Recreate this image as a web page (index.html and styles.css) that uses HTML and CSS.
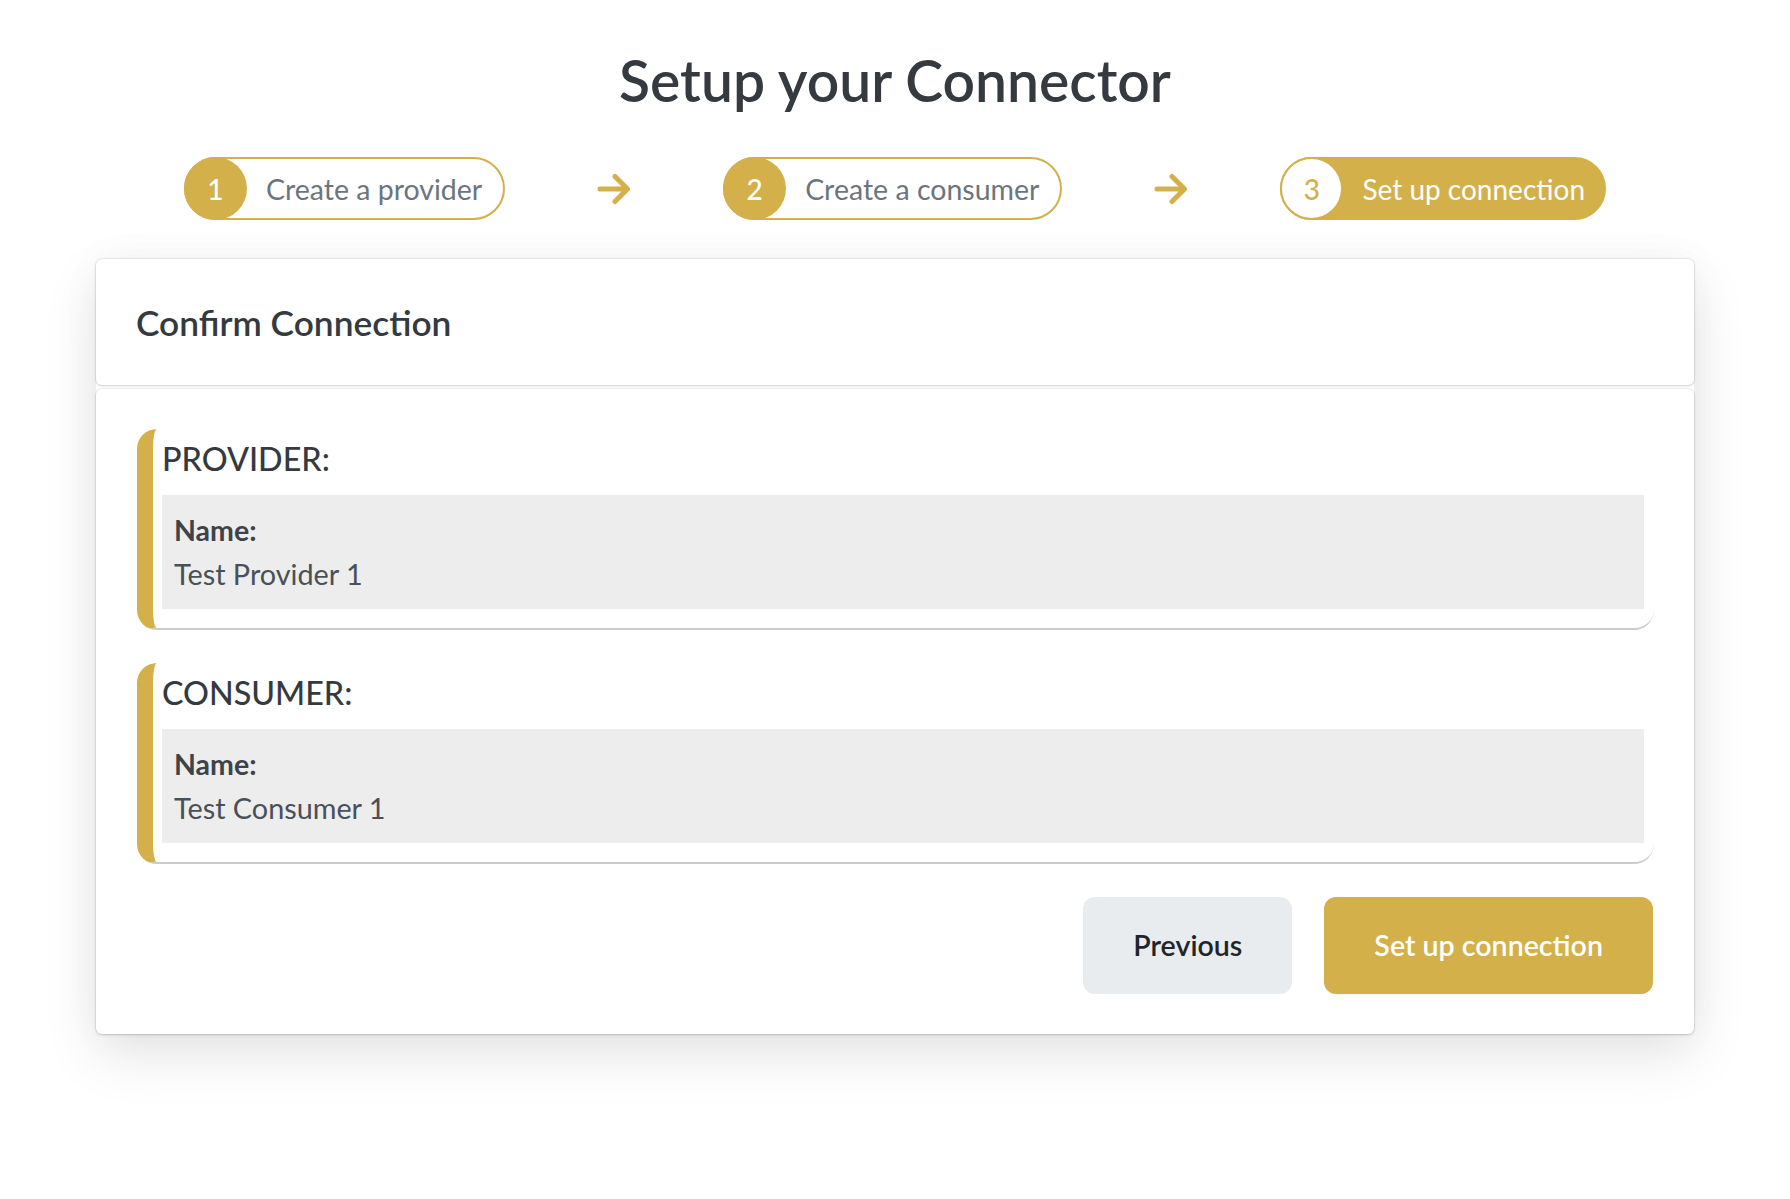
FILE: index.html
```html
<!DOCTYPE html>
<html lang="en">
<head>
<meta charset="utf-8">
<title>Setup your Connector</title>
<link rel="stylesheet" href="styles.css">
</head>
<body>
<main class="page">
  <h1 class="title">Setup your Connector</h1>
  <nav class="steps">
    <div class="pill">
      <span class="num">1</span>
      <span class="label">Create a provider</span>
    </div>
    <svg class="arrow" viewBox="0 0 34 32" width="34" height="32" aria-hidden="true">
      <path d="M3 16 H30 M18 3.5 L30.5 16 L18 28.5" fill="none" stroke="#d3b04a" stroke-width="5" stroke-linecap="round" stroke-linejoin="round"/>
    </svg>
    <div class="pill">
      <span class="num">2</span>
      <span class="label">Create a consumer</span>
    </div>
    <svg class="arrow" viewBox="0 0 34 32" width="34" height="32" aria-hidden="true">
      <path d="M3 16 H30 M18 3.5 L30.5 16 L18 28.5" fill="none" stroke="#d3b04a" stroke-width="5" stroke-linecap="round" stroke-linejoin="round"/>
    </svg>
    <div class="pill active">
      <span class="num">3</span>
      <span class="label">Set up connection</span>
    </div>
  </nav>

  <section class="card-wrap">
    <header class="card card-header">
      <h2 class="card-title">Confirm Connection</h2>
    </header>
    <div class="card card-body">
      <div class="entity">
        <h3 class="entity-title">PROVIDER:</h3>
        <div class="entity-box">
          <div class="field-label">Name:</div>
          <div class="field-value">Test Provider 1</div>
        </div>
      </div>
      <div class="entity">
        <h3 class="entity-title">CONSUMER:</h3>
        <div class="entity-box">
          <div class="field-label">Name:</div>
          <div class="field-value">Test Consumer 1</div>
        </div>
      </div>
      <div class="actions">
        <button class="btn btn-light" type="button">Previous</button>
        <button class="btn btn-gold" type="button">Set up connection</button>
      </div>
    </div>
  </section>
</main>
</body>
</html>
```

FILE: styles.css
```css
* { box-sizing: border-box; }

html, body {
  margin: 0;
  padding: 0;
  background: #ffffff;
}

body {
  font-family: "Lato", "Noto Sans", "Liberation Sans", sans-serif;
  color: #343a40;
}

.page {
  display: flex;
  flex-direction: column;
  align-items: center;
  min-height: 1199px;
  padding-top: 46px;
  padding-bottom: 120px;
}

.title {
  margin: 0;
  font-size: 57px;
  line-height: 1.2;
  font-weight: 600;
  color: #343a40;
}

.steps {
  display: flex;
  align-items: center;
  justify-content: center;
  gap: 92px;
  margin-top: 43px;
}

.arrow {
  display: block;
  flex: none;
}

.pill {
  display: flex;
  align-items: center;
  height: 63px;
  border: 2px solid #d3b04a;
  border-radius: 32px;
  background: #ffffff;
  padding-right: 21px;
}

.pill .num {
  flex: none;
  width: 63px;
  height: 63px;
  margin: -2px 0 -2px -2px;
  border-radius: 50%;
  background: #d3b04a;
  color: #ffffff;
  display: flex;
  align-items: center;
  justify-content: center;
  font-size: 28px;
  font-weight: 500;
}

.pill .label {
  margin-left: 19px;
  font-size: 28.5px;
  color: #6c757d;
  white-space: nowrap;
}

.pill.active {
  background: #d3b04a;
  padding-right: 19px;
}

.pill.active .num {
  background: #ffffff;
  border: 2px solid #d3b04a;
  color: #d3b04a;
}

.pill.active .label {
  color: #ffffff;
  font-size: 28px;
}

.card-wrap {
  width: 1598px;
  margin-top: 39px;
  border-radius: 8px;
  box-shadow: 0 22px 55px rgba(0, 0, 0, 0.10), 0 0 40px rgba(0, 0, 0, 0.04);
}

.card {
  background: #ffffff;
  border-radius: 6px;
  box-shadow: 0 1px 3px rgba(0, 0, 0, 0.16), 0 0 0 1px rgba(0, 0, 0, 0.05);
}

.card-header {
  height: 126px;
  display: flex;
  align-items: center;
  padding: 0 40px;
}

.card-title {
  margin: 0;
  font-size: 35.3px;
  font-weight: 600;
  color: #343a40;
}

.card-body {
  margin-top: 4px;
  padding: 40px 40px 40px 41px;
  display: flex;
  flex-direction: column;
  gap: 33px;
}

.entity {
  border-left: 16px solid #d3b04a;
  border-bottom: 2px solid #cccccc;
  border-radius: 20px;
  padding: 11px 10px 19px 9px;
}

.entity-title {
  margin: 0 0 16px;
  font-size: 32.3px;
  line-height: 1.2;
  font-weight: 500;
  color: #343a40;
}

.entity-box {
  background: #ededed;
  padding: 13px 12px;
}

.field-label {
  font-size: 28.5px;
  line-height: 44px;
  font-weight: 700;
  color: #3d4349;
}

.field-value {
  font-size: 28.8px;
  line-height: 44px;
  color: #4a5057;
}

.actions {
  display: flex;
  justify-content: flex-end;
  gap: 32px;
  padding-right: 1px;
}

.btn {
  height: 97px;
  padding: 0 50px;
  border: none;
  border-radius: 12px;
  font-family: inherit;
  font-size: 28.6px;
  font-weight: 600;
  cursor: pointer;
}

.btn-light {
  background: #e9ecef;
  color: #212529;
}

.btn-gold {
  background: #d3b04a;
  color: #ffffff;
}
```
